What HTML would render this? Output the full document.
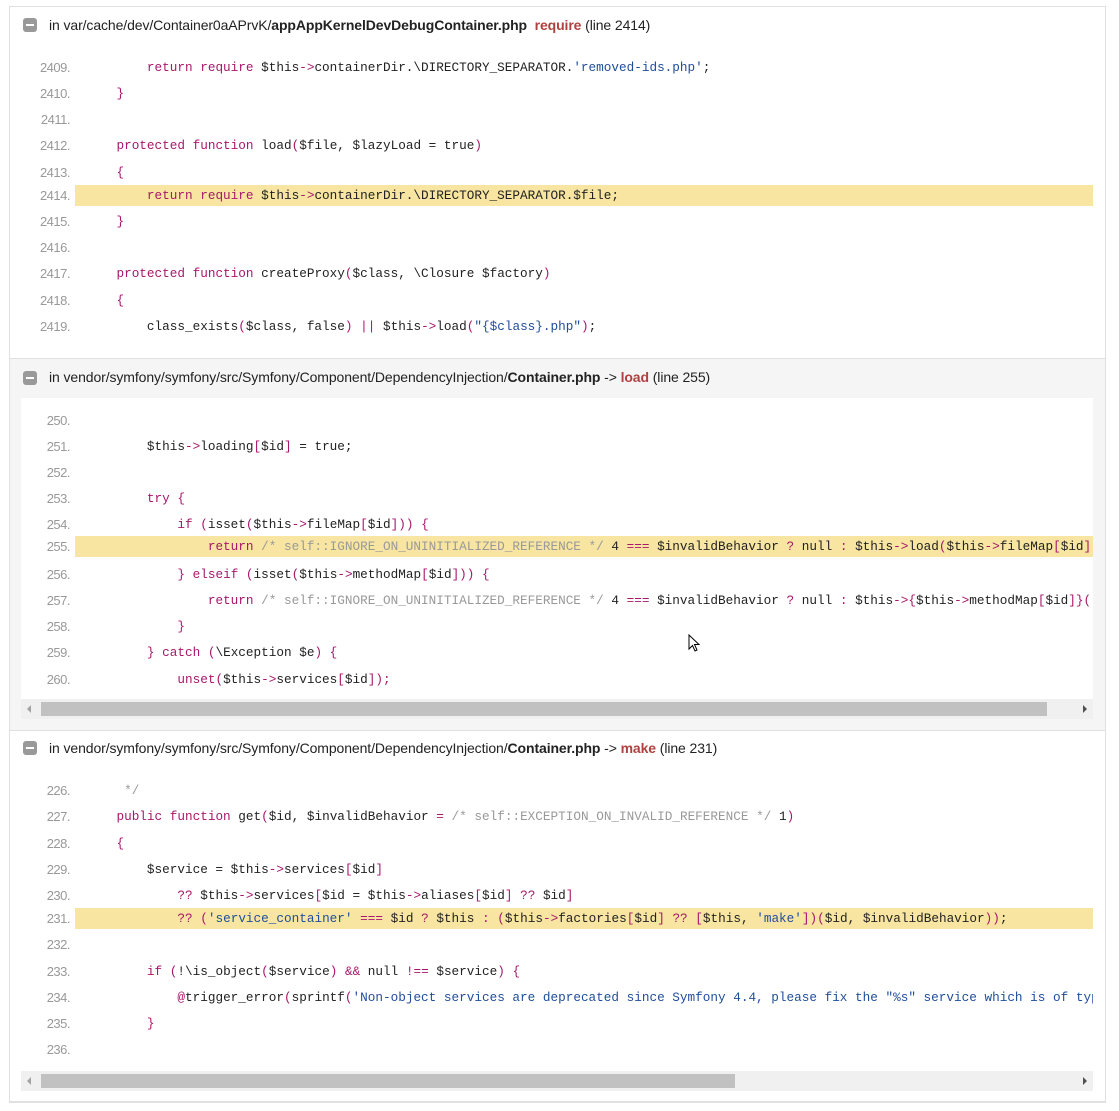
<!DOCTYPE html>
<html><head><meta charset="utf-8"><style>
*{margin:0;padding:0;box-sizing:border-box}
body{width:1119px;height:1111px;background:#fff;position:relative;overflow:hidden;font-family:"Liberation Sans",sans-serif}
.wrap{position:absolute;left:9px;top:6px;width:1097px;height:1097px;border-left:1px solid #e0e0e0;border-right:1px solid #e0e0e0;border-top:1px solid #e0e0e0;border-bottom:1px solid #e0e0e0}
.sec{position:absolute;left:10px;width:1095px}
.hd{position:absolute;left:39px;font-size:14px;letter-spacing:-0.1px;color:#222;white-space:nowrap}
.hd b{font-weight:bold}
.hd .f{color:#b0413e;font-weight:bold}
.ic{position:absolute;left:13px;width:14px;height:14px;background:#999;border-radius:3px}
.ic:after{content:"";position:absolute;left:3px;top:6px;width:8px;height:2px;background:#fff}
.code{position:absolute;left:11px;width:1072px;overflow:hidden;background:#fff}
.ln{position:absolute;left:0;width:1072px;height:20px;line-height:22px;white-space:pre;font-family:"Liberation Mono",monospace;font-size:12.7px;color:#222}
.ln.hl{background:#f7e5a1;left:54px;width:1018px;height:21px;line-height:21px}
.ln .n{position:absolute;left:0;width:49px;text-align:right;font-family:"Liberation Sans",sans-serif;font-size:13px;color:#999;letter-spacing:-0.5px}
.ln .c{position:absolute;left:65px}
.ln.hl .n{left:-54px}
.ln.hl .c{left:11px}
.k{color:#a8176c}.s{color:#1f4d9b}.m{color:#999}
.sb{position:absolute;left:11px;width:1072px;height:20px;background:#f0f0f0}
.sb .t{position:absolute;left:20px;top:3px;height:14px;background:#c1c1c1}
.sb .l,.sb .r{position:absolute;top:6px;width:0;height:0;border-top:4px solid transparent;border-bottom:4px solid transparent}
.sb .l{left:6px;border-right:4px solid #a3a3a3}
.sb .r{right:6px;border-left:4px solid #505050}
</style></head><body>
<div class="wrap"></div>

<div class="sec" style="top:7px;height:351px;background:#fff">
 <div class="ic" style="top:11px"></div>
 <div class="hd" style="top:10px">in var/cache/dev/Container0aAPrvK/<b>appAppKernelDevDebugContainer.php</b>&nbsp; <span class="f">require</span> (line 2414)</div>
</div>
<div class="code" style="left:21px;top:50px;height:300px;background:transparent">
 <div class="ln" style="top:7px"><span class="n">2409.</span><span class="c">        <span class="k">return require</span> $this<span class="k">-&gt;</span>containerDir.\DIRECTORY_SEPARATOR.<span class="s">'removed-ids.php'</span>;</span></div>
 <div class="ln" style="top:33px"><span class="n">2410.</span><span class="c">    <span class="k">}</span></span></div>
 <div class="ln" style="top:59px"><span class="n">2411.</span><span class="c"></span></div>
 <div class="ln" style="top:85px"><span class="n">2412.</span><span class="c">    <span class="k">protected function</span> load<span class="k">(</span>$file, $lazyLoad = true<span class="k">)</span></span></div>
 <div class="ln" style="top:112px"><span class="n">2413.</span><span class="c">    <span class="k">{</span></span></div>
 <div class="ln hl" style="top:135px"><span class="n">2414.</span><span class="c">        <span class="k">return require</span> $this<span class="k">-&gt;</span>containerDir.\DIRECTORY_SEPARATOR.$file;</span></div>
 <div class="ln" style="top:161px"><span class="n">2415.</span><span class="c">    <span class="k">}</span></span></div>
 <div class="ln" style="top:187px"><span class="n">2416.</span><span class="c"></span></div>
 <div class="ln" style="top:213px"><span class="n">2417.</span><span class="c">    <span class="k">protected function</span> createProxy<span class="k">(</span>$class, \Closure $factory<span class="k">)</span></span></div>
 <div class="ln" style="top:240px"><span class="n">2418.</span><span class="c">    <span class="k">{</span></span></div>
 <div class="ln" style="top:266px"><span class="n">2419.</span><span class="c">        class_exists<span class="k">(</span>$class, false<span class="k">)</span> <span class="k">||</span> $this<span class="k">-&gt;</span>load<span class="k">(</span><span class="s">"{$class}.php"</span><span class="k">)</span>;</span></div>
</div>

<div class="sec" style="top:358px;height:373px;background:#f5f5f5;border-top:1px solid #e0e0e0;border-bottom:1px solid #e0e0e0">
 <div class="ic" style="top:12px"></div>
 <div class="hd" style="top:10px">in vendor/symfony/symfony/src/Symfony/Component/DependencyInjection/<b>Container.php</b> -&gt; <span class="f">load</span> (line 255)</div>
 <div class="code" style="top:39px;height:301px">
  <div class="ln" style="top:12px"><span class="n">250.</span><span class="c"></span></div>
  <div class="ln" style="top:38px"><span class="n">251.</span><span class="c">        $this<span class="k">-&gt;</span>loading<span class="k">[</span>$id<span class="k">]</span> = true;</span></div>
  <div class="ln" style="top:64px"><span class="n">252.</span><span class="c"></span></div>
  <div class="ln" style="top:90px"><span class="n">253.</span><span class="c">        <span class="k">try {</span></span></div>
  <div class="ln" style="top:116px"><span class="n">254.</span><span class="c">            <span class="k">if (</span>isset<span class="k">(</span>$this<span class="k">-&gt;</span>fileMap<span class="k">[</span>$id<span class="k">]))</span> <span class="k">{</span></span></div>
  <div class="ln hl" style="top:138px"><span class="n">255.</span><span class="c">                <span class="k">return</span> <span class="m">/* self::IGNORE_ON_UNINITIALIZED_REFERENCE */</span> 4 <span class="k">===</span> $invalidBehavior <span class="k">?</span> null <span class="k">:</span> $this<span class="k">-&gt;</span>load<span class="k">(</span>$this<span class="k">-&gt;</span>fileMap<span class="k">[</span>$id<span class="k">]</span>);</span></div>
  <div class="ln" style="top:166px"><span class="n">256.</span><span class="c">            <span class="k">}</span> <span class="k">elseif (</span>isset<span class="k">(</span>$this<span class="k">-&gt;</span>methodMap<span class="k">[</span>$id<span class="k">]))</span> <span class="k">{</span></span></div>
  <div class="ln" style="top:192px"><span class="n">257.</span><span class="c">                <span class="k">return</span> <span class="m">/* self::IGNORE_ON_UNINITIALIZED_REFERENCE */</span> 4 <span class="k">===</span> $invalidBehavior <span class="k">?</span> null <span class="k">:</span> $this<span class="k">-&gt;{</span>$this<span class="k">-&gt;</span>methodMap<span class="k">[</span>$id<span class="k">]}(</span>);</span></div>
  <div class="ln" style="top:218px"><span class="n">258.</span><span class="c">            <span class="k">}</span></span></div>
  <div class="ln" style="top:244px"><span class="n">259.</span><span class="c">        <span class="k">}</span> <span class="k">catch (</span>\Exception $e<span class="k">) {</span></span></div>
  <div class="ln" style="top:271px"><span class="n">260.</span><span class="c">            <span class="k">unset(</span>$this<span class="k">-&gt;</span>services<span class="k">[</span>$id<span class="k">]);</span></span></div>
 </div>
 <div class="sb" style="top:340px"><span class="l"></span><span class="t" style="width:1006px"></span><span class="r"></span></div>
</div>

<div class="sec" style="top:731px;height:371px;background:#fff;border-bottom:1px solid #e0e0e0">
 <div class="ic" style="top:10px"></div>
 <div class="hd" style="top:9px">in vendor/symfony/symfony/src/Symfony/Component/DependencyInjection/<b>Container.php</b> -&gt; <span class="f">make</span> (line 231)</div>
 <div class="code" style="top:40px;height:300px">
  <div class="ln" style="top:9px"><span class="n">226.</span><span class="c">     <span class="m">*/</span></span></div>
  <div class="ln" style="top:35px"><span class="n">227.</span><span class="c">    <span class="k">public function</span> get<span class="k">(</span>$id, $invalidBehavior <span class="k">=</span> <span class="m">/* self::EXCEPTION_ON_INVALID_REFERENCE */</span> 1<span class="k">)</span></span></div>
  <div class="ln" style="top:62px"><span class="n">228.</span><span class="c">    <span class="k">{</span></span></div>
  <div class="ln" style="top:88px"><span class="n">229.</span><span class="c">        $service = $this<span class="k">-&gt;</span>services<span class="k">[</span>$id<span class="k">]</span></span></div>
  <div class="ln" style="top:114px"><span class="n">230.</span><span class="c">            <span class="k">??</span> $this<span class="k">-&gt;</span>services<span class="k">[</span>$id = $this<span class="k">-&gt;</span>aliases<span class="k">[</span>$id<span class="k">]</span> <span class="k">??</span> $id<span class="k">]</span></span></div>
  <div class="ln hl" style="top:137px"><span class="n">231.</span><span class="c">            <span class="k">??</span> <span class="k">(</span><span class="s">'service_container'</span> <span class="k">===</span> $id <span class="k">?</span> $this <span class="k">:</span> <span class="k">(</span>$this<span class="k">-&gt;</span>factories<span class="k">[</span>$id<span class="k">]</span> <span class="k">??</span> <span class="k">[</span>$this, <span class="s">'make'</span><span class="k">])(</span>$id, $invalidBehavior<span class="k">))</span>;</span></div>
  <div class="ln" style="top:163px"><span class="n">232.</span><span class="c"></span></div>
  <div class="ln" style="top:190px"><span class="n">233.</span><span class="c">        <span class="k">if (</span>!\is_object<span class="k">(</span>$service<span class="k">)</span> <span class="k">&amp;&amp;</span> null <span class="k">!==</span> $service<span class="k">) {</span></span></div>
  <div class="ln" style="top:216px"><span class="n">234.</span><span class="c">            <span class="k">@</span>trigger_error<span class="k">(</span>sprintf<span class="k">(</span><span class="s">'Non-object services are deprecated since Symfony 4.4, please fix the "%s" service which is of type'</span></span></div>
  <div class="ln" style="top:242px"><span class="n">235.</span><span class="c">        <span class="k">}</span></span></div>
  <div class="ln" style="top:268px"><span class="n">236.</span><span class="c"></span></div>
 </div>
 <div class="sb" style="top:340px"><span class="l"></span><span class="t" style="width:694px"></span><span class="r"></span></div>
</div>

<svg style="position:absolute;left:688px;top:634px" width="12" height="19" viewBox="0 0 12 19"><path d="M1 1 L1 15 L4.5 11.5 L7 17 L9 16 L6.5 10.5 L11 10.5 Z" fill="#fff" stroke="#000" stroke-width="1"/></svg>
</body></html>
